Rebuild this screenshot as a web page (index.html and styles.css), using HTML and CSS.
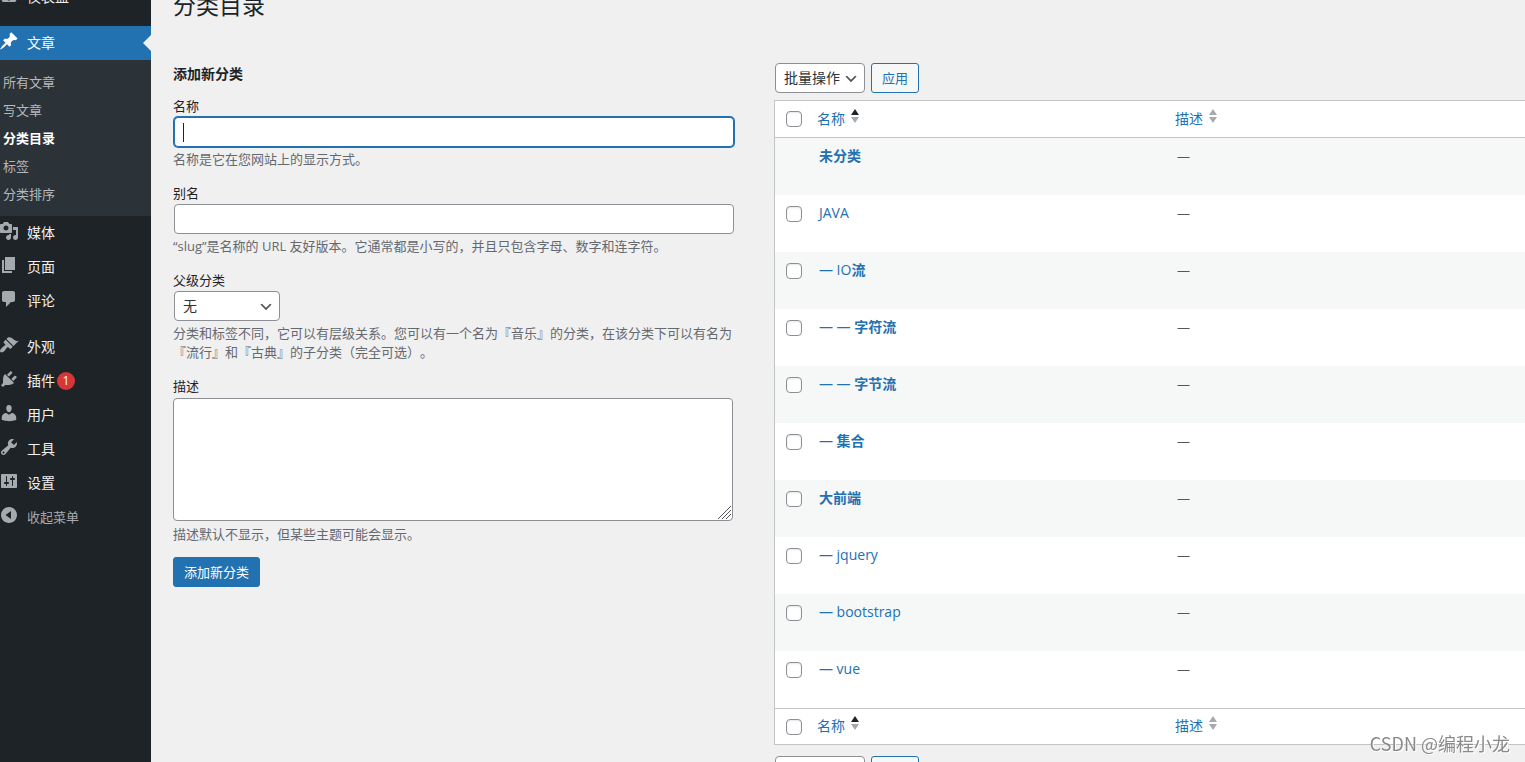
FILE: index.html
```
<!DOCTYPE html>
<html lang="zh-CN">
<head>
<meta charset="utf-8">
<title>分类目录</title>
<link rel="stylesheet" href="styles.css">
</head>
<body>
<div class="admin">
  <nav class="sidebar" aria-label="主菜单">
    <ul class="menu">
      <li><a class="menu-link" href="#"><svg class="menu-icon" viewBox="0 0 20 20"><path d="M3.76 17h12.48c1.1-1.37 1.76-3.11 1.76-5 0-4.42-3.58-8-8-8s-8 3.58-8 8c0 1.890.66 3.630 1.760 5zM10 12.500a1.500 1.500 0 1 1 0 3 1.500 1.500 0 0 1 0-3z" fill-rule="evenodd"/></svg><span>仪表盘</span></a></li>
      <li class="menu-separator"></li>
      <li>
        <a class="menu-link menu-link-current" href="#"><svg class="menu-icon" viewBox="0 0 20 20"><path d="M10.44 3.02l1.82-1.82 6.36 6.35-1.83 1.82c-1.05-.68-2.48-.57-3.41.36l-.75.75c-.92.93-1.04 2.35-.35 3.41l-1.83 1.82-2.41-2.41-2.8 2.79c-.42.42-3.38 2.71-3.8 2.29s1.86-3.39 2.28-3.81l2.79-2.79L4.1 9.36l1.83-1.82c1.05.69 2.48.57 3.4-.36l.75-.75c.93-.92 1.05-2.35.36-3.41z"/></svg><span>文章</span></a>
        <ul class="submenu">
          <li><a class="submenu-link" href="#">所有文章</a></li>
          <li><a class="submenu-link" href="#">写文章</a></li>
          <li><a class="submenu-link submenu-link-current" href="#" aria-current="page">分类目录</a></li>
          <li><a class="submenu-link" href="#">标签</a></li>
          <li><a class="submenu-link" href="#">分类排序</a></li>
        </ul>
      </li>
      <li><a class="menu-link" href="#"><svg class="menu-icon" viewBox="0 0 20 20"><path d="M13 11V4c0-.55-.45-1-1-1h-1.67L9 1H5L3.67 3H2c-.55 0-1 .45-1 1v7c0 .55.45 1 1 1h10c.55 0 1-.45 1-1zM7 4.5c1.38 0 2.5 1.12 2.5 2.5S8.38 9.5 7 9.5 4.5 8.38 4.5 7 5.62 4.5 7 4.5zM14 6h5v10.5c0 1.38-1.12 2.5-2.5 2.5S14 17.88 14 16.5s1.12-2.5 2.5-2.5c.17 0 .34.02.5.05V9h-3V6zm-4 8.05V13h2v3.5c0 1.38-1.12 2.5-2.5 2.5S7 17.88 7 16.5 8.12 14 9.5 14c.17 0 .34.02.5.05z"/></svg><span>媒体</span></a></li>
      <li><a class="menu-link" href="#"><svg class="menu-icon" viewBox="0 0 20 20"><path d="M6 15V2h10v13H6zm-1 1h8v2H3V5h2v11z"/></svg><span>页面</span></a></li>
      <li><a class="menu-link" href="#"><svg class="menu-icon" viewBox="0 0 20 20"><path d="M5 2h9c1.1 0 2 .9 2 2v7c0 1.1-.9 2-2 2h-2l-5 5v-5H5c-1.1 0-2-.9-2-2V4c0-1.1.9-2 2-2z"/></svg><span>评论</span></a></li>
      <li class="menu-separator"></li>
      <li><a class="menu-link" href="#"><svg class="menu-icon" viewBox="0 0 20 20"><path d="M14.48 11.06L7.41 3.99l1.5-1.5c.5-.56 2.3-.47 3.51.32 1.21.8 1.43 1.28 2.91 2.1 1.18.64 2.45 1.26 4.45.85zm-.71.71L6.7 4.7 4.93 6.47c-.39.39-.39 1.02 0 1.41l1.06 1.06c.39.39.39 1.03 0 1.42-.6.6-1.43 1.11-2.21 1.69-.35.26-.7.53-1.01.84C1.43 14.23.4 16.08 1.4 17.07c.99 1 2.84-.03 4.18-1.36.31-.31.58-.66.85-1.02.57-.78 1.08-1.61 1.69-2.21.39-.39 1.02-.39 1.41 0l1.06 1.06c.39.39 1.02.39 1.41 0z"/></svg><span>外观</span></a></li>
      <li><a class="menu-link" href="#"><svg class="menu-icon" viewBox="0 0 20 20"><path d="M13.11 4.36L9.87 7.6 8 5.73l3.24-3.24c.35-.34 1.05-.2 1.56.32.52.51.66 1.21.31 1.55zm-8 1.77l.91-1.12 9.01 9.01-1.19.84c-.71.71-2.63 1.16-3.82 1.16H6.14L4.9 17.26c-.59.59-1.54.59-2.12 0-.59-.58-.59-1.53 0-2.12l1.24-1.24v-3.88c0-1.13.4-3.19 1.09-3.89zm7.26 3.97l3.24-3.24c.34-.35 1.04-.21 1.55.31.52.51.66 1.21.31 1.55l-3.24 3.25z"/></svg><span>插件</span><span class="badge">1</span></a></li>
      <li><a class="menu-link" href="#"><svg class="menu-icon" viewBox="0 0 20 20"><path d="M10 9.25c-2.27 0-2.73-3.44-2.73-3.44C7 4.02 7.82 2 9.97 2c2.16 0 2.98 2.02 2.71 3.81 0 0-.41 3.44-2.68 3.44zm0 2.57L12.72 10c2.39 0 4.52 2.33 4.52 4.53v2.49s-3.65 1.13-7.24 1.13c-3.65 0-7.24-1.13-7.24-1.13v-2.49c0-2.25 1.94-4.48 4.47-4.48z"/></svg><span>用户</span></a></li>
      <li><a class="menu-link" href="#"><svg class="menu-icon" viewBox="0 0 20 20"><path d="M16.68 9.77c-1.34 1.34-3.3 1.67-4.95.99l-5.41 6.52c-.99.99-2.59.99-3.58 0s-.99-2.59 0-3.57l6.52-5.42c-.68-1.65-.35-3.61.99-4.95 1.28-1.28 3.12-1.62 4.72-1.06l-2.89 2.89 2.82 2.82 2.86-2.87c.53 1.58.18 3.39-1.08 4.65zM3.81 16.21c.4.39 1.04.39 1.43 0 .4-.4.4-1.04 0-1.43-.39-.4-1.03-.4-1.43 0-.39.39-.39 1.03 0 1.43z"/></svg><span>工具</span></a></li>
      <li><a class="menu-link" href="#"><svg class="menu-icon" viewBox="0 0 20 20"><path d="M18 16V4c0-.55-.45-1-1-1H3c-.55 0-1 .45-1 1v12c0 .55.45 1 1 1h14c.55 0 1-.45 1-1zM8 11h1c.55 0 1 .45 1 1s-.45 1-1 1H8v1.5c0 .28-.22.5-.5.5s-.5-.22-.5-.5V13H6c-.55 0-1-.45-1-1s.45-1 1-1h1V5.5c0-.28.22-.5.5-.5s.5.22.5.5V11zm5-2h-1c-.55 0-1-.45-1-1s.45-1 1-1h1V5.5c0-.28.22-.5.5-.5s.5.22.5.5V7h1c.55 0 1 .45 1 1s-.45 1-1 1h-1v5.5c0 .28-.22.5-.5.5s-.5-.22-.5-.5V9z"/></svg><span>设置</span></a></li>
      <li><button class="menu-link menu-collapse" type="button"><svg class="menu-icon" viewBox="0 0 20 20"><path fill-rule="evenodd" d="M10 2c-4.42 0-8 3.58-8 8s3.58 8 8 8 8-3.58 8-8-3.58-8-8-8zM12 6v8l-5.500-4z"/></svg><span>收起菜单</span></button></li>
    </ul>
  </nav>

  <main class="content">
    <h1 class="page-title">分类目录</h1>
    <div class="columns">
      <form class="add-form">
        <h2 class="form-title">添加新分类</h2>
        <div class="field">
          <label class="field-label" for="name">名称</label>
          <input class="text-input text-input-active" id="name" type="text">
          <p class="field-help">名称是它在您网站上的显示方式。</p>
        </div>
        <div class="field">
          <label class="field-label" for="slug">别名</label>
          <input class="text-input" id="slug" type="text">
          <p class="field-help">“slug”是名称的 URL 友好版本。它通常都是小写的，并且只包含字母、数字和连字符。</p>
        </div>
        <div class="field">
          <label class="field-label" for="parent">父级分类</label>
          <select class="select select-parent" id="parent"><option>无</option></select>
          <p class="field-help">分类和标签不同，它可以有层级关系。您可以有一个名为『音乐』的分类，在该分类下可以有名为『流行』和『古典』的子分类（完全可选）。</p>
        </div>
        <div class="field field-last">
          <label class="field-label" for="description">描述</label>
          <textarea class="textarea" id="description"></textarea>
          <p class="field-help">描述默认不显示，但某些主题可能会显示。</p>
        </div>
        <button class="button button-primary" type="button">添加新分类</button>
      </form>

      <section class="list">
        <div class="bulk-bar">
          <select class="select select-bulk" aria-label="批量操作"><option>批量操作</option></select>
          <button class="button" type="button">应用</button>
        </div>
        <table class="terms">
          <colgroup><col class="col-check"><col class="col-name"><col></colgroup>
          <thead>
            <tr>
              <th class="check-cell"><input class="checkbox" type="checkbox" aria-label="全选"></th>
              <th><a class="sort" href="#">名称<svg class="sort-icon" viewBox="0 0 8 14"><path class="sort-on" d="M4 0l4 6H0z"/><path d="M0 8h8l-4 6z"/></svg></a></th>
              <th><a class="sort" href="#">描述<svg class="sort-icon" viewBox="0 0 8 14"><path d="M4 0l4 6H0z"/><path d="M0 8h8l-4 6z"/></svg></a></th>
            </tr>
          </thead>
          <tbody>
            <tr><td class="check-cell"></td><td><a class="term" href="#">未分类</a></td><td>—</td></tr>
            <tr><td class="check-cell"><input class="checkbox" type="checkbox" aria-label="选择 JAVA"></td><td><a class="term term-latin" href="#">JAVA</a></td><td>—</td></tr>
            <tr><td class="check-cell"><input class="checkbox" type="checkbox" aria-label="选择 IO流"></td><td><a class="term" href="#"><span class="term-latin">— IO</span>流</a></td><td>—</td></tr>
            <tr><td class="check-cell"><input class="checkbox" type="checkbox" aria-label="选择 字符流"></td><td><a class="term" href="#"><span class="term-latin">— — </span>字符流</a></td><td>—</td></tr>
            <tr><td class="check-cell"><input class="checkbox" type="checkbox" aria-label="选择 字节流"></td><td><a class="term" href="#"><span class="term-latin">— — </span>字节流</a></td><td>—</td></tr>
            <tr><td class="check-cell"><input class="checkbox" type="checkbox" aria-label="选择 集合"></td><td><a class="term" href="#"><span class="term-latin">— </span>集合</a></td><td>—</td></tr>
            <tr><td class="check-cell"><input class="checkbox" type="checkbox" aria-label="选择 大前端"></td><td><a class="term" href="#">大前端</a></td><td>—</td></tr>
            <tr><td class="check-cell"><input class="checkbox" type="checkbox" aria-label="选择 jquery"></td><td><a class="term term-latin" href="#">— jquery</a></td><td>—</td></tr>
            <tr><td class="check-cell"><input class="checkbox" type="checkbox" aria-label="选择 bootstrap"></td><td><a class="term term-latin" href="#">— bootstrap</a></td><td>—</td></tr>
            <tr><td class="check-cell"><input class="checkbox" type="checkbox" aria-label="选择 vue"></td><td><a class="term term-latin" href="#">— vue</a></td><td>—</td></tr>
          </tbody>
          <tfoot>
            <tr>
              <th class="check-cell"><input class="checkbox" type="checkbox" aria-label="全选"></th>
              <th><a class="sort" href="#">名称<svg class="sort-icon" viewBox="0 0 8 14"><path class="sort-on" d="M4 0l4 6H0z"/><path d="M0 8h8l-4 6z"/></svg></a></th>
              <th><a class="sort" href="#">描述<svg class="sort-icon" viewBox="0 0 8 14"><path d="M4 0l4 6H0z"/><path d="M0 8h8l-4 6z"/></svg></a></th>
            </tr>
          </tfoot>
        </table>
        <div class="bulk-bar bulk-bar-bottom">
          <select class="select select-bulk" aria-label="批量操作"><option>批量操作</option></select>
          <button class="button" type="button">应用</button>
        </div>
      </section>
    </div>
  </main>
</div>
<div class="watermark">CSDN @编程小龙</div>
</body>
</html>
```

FILE: styles.css
```
* {
  box-sizing: border-box;
}

html {
  height: 100%;
  overflow: hidden;
}

body {
  height: 100%;
  margin: 0;
  overflow: hidden;
  background: #f0f0f1;
  color: #1d2327;
  font: 13px/19px "Open Sans", "Noto Sans CJK SC", sans-serif;
  text-spacing-trim: space-all;
}

ul,
h1,
h2,
p {
  margin: 0;
  padding: 0;
}

ul {
  list-style: none;
}

a {
  color: #2271b1;
  text-decoration: none;
}

input,
select,
textarea,
button {
  font-family: inherit;
}

.admin {
  display: flex;
  min-height: 100%;
  background: #f0f0f0;
}

/* Sidebar */
.sidebar {
  flex: 0 0 151px;
  background: #1d2327;
}

.menu {
  margin-top: -20px;
}

.menu-link {
  position: relative;
  display: flex;
  align-items: center;
  width: 100%;
  height: 34px;
  padding: 0;
  border: 0;
  background: none;
  color: #f0f0f1;
  font-size: 14px;
  line-height: 18px;
}

.menu-icon {
  flex: none;
  width: 20px;
  height: 20px;
  margin: 0 8px 4px -1px;
  fill: #a7aaad;
}

.menu-link-current {
  background: #2271b1;
  color: #fff;
}

.menu-link-current .menu-icon {
  fill: #fff;
}

.menu-link-current::after {
  position: absolute;
  top: 9px;
  right: 0;
  border: 8px solid transparent;
  border-right-color: #f0f0f0;
  border-left: 0;
  content: "";
}

.menu-collapse {
  color: #a7aaad;
  font-size: 13px;
}

.menu-separator {
  height: 12px;
}

.badge {
  min-width: 18px;
  height: 18px;
  margin-left: 2px;
  border-radius: 9px;
  background: #d63638;
  color: #fff;
  font-size: 12px;
  text-align: center;
}

.submenu {
  padding: 8px 0;
  background: #2c3338;
}

.submenu-link {
  display: block;
  padding-left: 3px;
  color: #b4b9be;
  font-size: 13px;
  line-height: 28px;
}

.submenu-link-current {
  color: #fff;
  font-weight: 600;
}

/* Content */
.content {
  flex: 1;
  min-width: 0;
  padding-left: 22px;
}

.page-title {
  margin-top: -10px;
  font-size: 23px;
  font-weight: 400;
  line-height: 30px;
}

.columns {
  display: flex;
  padding-top: 43px;
}

.add-form {
  flex: 0 0 44.45%;
  padding-right: 39px;
}

.form-title {
  margin-bottom: 13px;
  font-size: 14px;
  font-weight: 600;
  line-height: 21px;
}

.field {
  margin-bottom: 15px;
}

.field-last {
  margin-bottom: 13px;
}

.field-label {
  display: block;
  padding-bottom: 2px;
  line-height: 18px;
}

.field-help {
  margin-top: 3px;
  color: #646970;
}

.text-input,
.select,
.textarea {
  display: block;
  border: 1px solid #8c8f94;
  border-radius: 4px;
  background-color: #fff;
  color: #2c3338;
  font-size: 14px;
}

.text-input {
  width: calc(100% - 2px);
  height: 30px;
  margin: 0 1px;
  padding: 0 8px;
}

/* Text caret of the field being edited */
.text-input-active {
  border-color: #2271b1;
  background-image: linear-gradient(#1d2327, #1d2327);
  background-position: 8px center;
  background-repeat: no-repeat;
  background-size: 1px 19px;
  box-shadow: 0 0 0 1px #2271b1;
}

.textarea {
  width: calc(100% - 2px);
  height: 123px;
  margin: 1px 0 4px;
  resize: vertical;
}

.textarea::-webkit-resizer {
  background: url("data:image/svg+xml,%3Csvg xmlns='http://www.w3.org/2000/svg' viewBox='0 0 15 15'%3E%3Cpath d='M1 14L14 1M5 14l9-9M9 14l5-5' stroke='%23555' stroke-width='1'/%3E%3C/svg%3E") center / 15px 15px no-repeat;
}

.select {
  height: 30px;
  padding: 0 24px 2px 8px;
  appearance: none;
  background-image: url("data:image/svg+xml,%3Csvg xmlns='http://www.w3.org/2000/svg' viewBox='0 0 20 20'%3E%3Cpath d='M5 6l5 5 5-5 2 1-7 7-7-7 2-1z' fill='%23555'/%3E%3C/svg%3E");
  background-position: right 5px top 55%;
  background-repeat: no-repeat;
  background-size: 16px 16px;
}

.select-parent {
  width: 106px;
  margin-left: 1px;
}

.select-bulk {
  width: 90px;
}

.button {
  height: 30px;
  padding: 0 10px 2px;
  border: 1px solid #2271b1;
  border-radius: 3px;
  background: #f6f7f7;
  color: #2271b1;
  font-size: 13px;
}

.button-primary {
  background: #2271b1;
  color: #fff;
}

/* Term list */
.list {
  flex: 1;
  min-width: 0;
}

.bulk-bar {
  display: flex;
  gap: 6px;
  padding-left: 1px;
  margin-bottom: 7px;
}

.bulk-bar-bottom {
  margin-top: 11px;
}

.terms {
  width: 100%;
  table-layout: fixed;
  border: 1px solid #c3c4c7;
  border-right: 0;
  border-spacing: 0;
  background: #fff;
  font-size: 14px;
}

.col-check {
  width: 34px;
}

.col-name {
  width: 358px;
}

.terms th {
  padding: 0 8px 2px;
  font-weight: 400;
  text-align: left;
}

.terms thead th {
  height: 37px;
  border-bottom: 1px solid #c3c4c7;
}

.terms tfoot th {
  height: 36px;
  border-top: 1px solid #c3c4c7;
}

.terms td {
  height: 57px;
  padding: 8px 10px;
  color: #50575e;
  font-size: 13px;
  line-height: 20px;
  vertical-align: top;
}

.terms tbody tr:nth-child(odd) {
  background: #f6f7f7;
}

.terms .check-cell {
  padding-right: 0;
  padding-bottom: 0;
  padding-left: 11px;
}

.checkbox {
  display: block;
  width: 16px;
  height: 16px;
  margin: 0;
  border: 1px solid #8c8f94;
  border-radius: 4px;
  appearance: none;
  background: #fff;
  box-shadow: inset 0 1px 2px rgba(0, 0, 0, 0.1);
}

td .checkbox {
  margin-top: 3px;
}

.sort {
  display: flex;
  gap: 6px;
}

.sort-icon {
  width: 8px;
  height: 14px;
  fill: #a7aaad;
}

.sort-on {
  fill: #1d2327;
}

.term {
  font-size: 14px;
  font-weight: 600;
}

.term-latin {
  font-weight: 500;
}

.watermark {
  position: fixed;
  right: 15px;
  bottom: 6px;
  color: #8a8a8a;
  font: 18px/26px "Noto Sans CJK SC", sans-serif;
  text-shadow: 1px 1px 0 #fff;
}
```
